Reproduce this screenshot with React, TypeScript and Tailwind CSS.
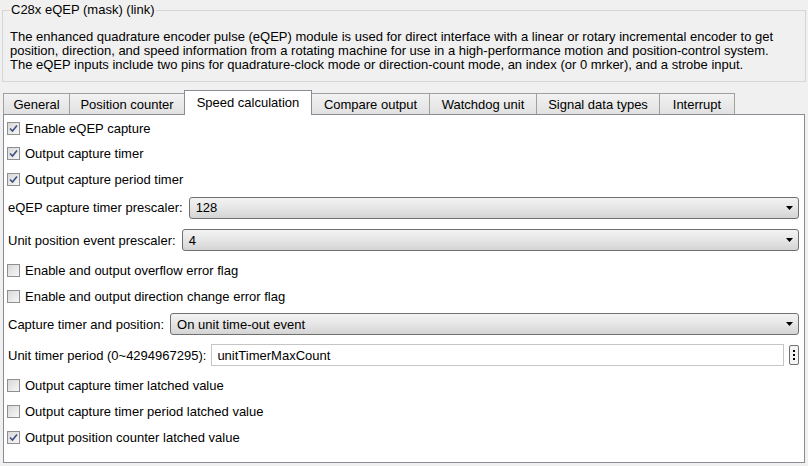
const tabs = [
  { label: "General", w: 66 },
  { label: "Position counter", w: 115 },
  { label: "Speed calculation", w: 128, active: true },
  { label: "Compare output", w: 117 },
  { label: "Watchdog unit", w: 107 },
  { label: "Signal data types", w: 123 },
  { label: "Interrupt", w: 76 },
];

function CheckBox({ checked }: { checked?: boolean }) {
  return (
    <span className="flex h-[13px] w-[13px] shrink-0 items-center justify-center border border-[#8f8f8f] bg-gradient-to-br from-[#d8d8d8] to-[#f7f7f7]">
      {checked && (
        <svg width="9" height="9" viewBox="0 0 9 9">
          <path d="M1 4.5 L3.5 7 L8 1.5" fill="none" stroke="#3d4f82" strokeWidth="1.6" />
        </svg>
      )}
    </span>
  );
}

function CheckRow({ label, checked, h }: { label: string; checked?: boolean; h: string }) {
  return (
    <div className={`flex items-center gap-[5px] pl-[2px] ${h}`}>
      <CheckBox checked={checked} />
      <span>{label}</span>
    </div>
  );
}

function Select({ label, value, h }: { label: string; value: string; h: string }) {
  return (
    <div className={`flex items-center gap-[6px] pl-[3px] pr-[5px] ${h}`}>
      <span className="shrink-0">{label}</span>
      <div className="relative flex h-[22px] flex-1 items-center rounded-[3px] border border-[#707070] bg-gradient-to-b from-[#f3f3f3] via-[#e6e6e6] to-[#d4d4d4] pl-[6px]">
        <span>{value}</span>
        <svg className="absolute right-[5px] top-[8px]" width="7" height="4" viewBox="0 0 7 4">
          <path d="M0 0 H7 L3.5 4 Z" fill="#000" />
        </svg>
      </div>
    </div>
  );
}

export default function App() {
  return (
    <div className="h-[466px] w-[808px] overflow-hidden bg-[#f0f0f0] text-[13px] leading-[15px] text-black [font-family:'Liberation_Sans',Arial,sans-serif]">
      <fieldset className="mx-[2px] mt-[2px] h-[80px] border border-[#d5d5d5] pl-[7px]">
        <legend className="px-[1px] leading-[16px]">C28x eQEP (mask) (link)</legend>
        <p className="mt-[12px] leading-[14px] whitespace-nowrap">
          The enhanced quadrature encoder pulse (eQEP) module is used for direct interface with a linear or rotary incremental encoder to get
          <br />
          position, direction, and speed information from a rotating machine for use in a high-performance motion and position-control system.
          <br />
          The eQEP inputs include two pins for quadrature-clock mode or direction-count mode, an index (or 0 mrker), and a strobe input.
        </p>
      </fieldset>

      {/* tab strip */}
      <div className="mt-[8px] flex h-[24px] items-end pl-[3px]">
        {tabs.map((t, i) =>
          t.active ? (
            <div
              key={t.label}
              style={{ width: t.w }}
              className="relative z-10 -mb-[1px] flex h-[25px] items-start justify-center border border-b-0 border-[#898c95] bg-white pt-[4px]"
            >
              {t.label}
            </div>
          ) : (
            <div
              key={t.label}
              style={{ width: t.w }}
              className={`flex h-[21px] items-center justify-center border-t border-[#a0a0a0] bg-gradient-to-b from-[#f2f2f2] to-[#e1e1e1] ${
                i === tabs.length - 1 ? "border-r" : ""
              } ${tabs[i - 1]?.active ? "" : "border-l"}`}
            >
              {t.label}
            </div>
          )
        )}
      </div>

      {/* tab page */}
      <div className="ml-[3px] flex h-[349px] w-[802px] flex-col border border-[#898c95] bg-white pl-[1px]">
        <CheckRow label="Enable eQEP capture" checked h="h-[26px]" />
        <CheckRow label="Output capture timer" checked h="h-[25px]" />
        <CheckRow label="Output capture period timer" checked h="h-[26px]" />
        <Select label="eQEP capture timer prescaler:" value="128" h="h-[31px]" />
        <Select label="Unit position event prescaler:" value="4" h="h-[34px]" />
        <CheckRow label="Enable and output overflow error flag" h="h-[26px]" />
        <CheckRow label="Enable and output direction change error flag" h="h-[26px]" />
        <Select label="Capture timer and position:" value="On unit time-out event" h="h-[30px]" />
        <div className="flex h-[32px] items-center gap-[5px] pl-[3px] pr-[5px]">
          <span className="shrink-0">Unit timer period (0~4294967295):</span>
          <div className="flex h-[22px] flex-1 items-center border border-[#c5c5c5] bg-white pl-[5px]">unitTimerMaxCount</div>
          <div className="flex h-[20px] w-[10px] flex-col items-center justify-center gap-[2px] rounded-[2px] border border-[#707070] bg-[#f4f4f4]">
            <span className="h-[2px] w-[2px] bg-black" />
            <span className="h-[2px] w-[2px] bg-black" />
            <span className="h-[2px] w-[2px] bg-black" />
          </div>
        </div>
        <CheckRow label="Output capture timer latched value" h="h-[28px]" />
        <CheckRow label="Output capture timer period latched value" h="h-[24px]" />
        <CheckRow label="Output position counter latched value" checked h="h-[28px]" />
      </div>
    </div>
  );
}
